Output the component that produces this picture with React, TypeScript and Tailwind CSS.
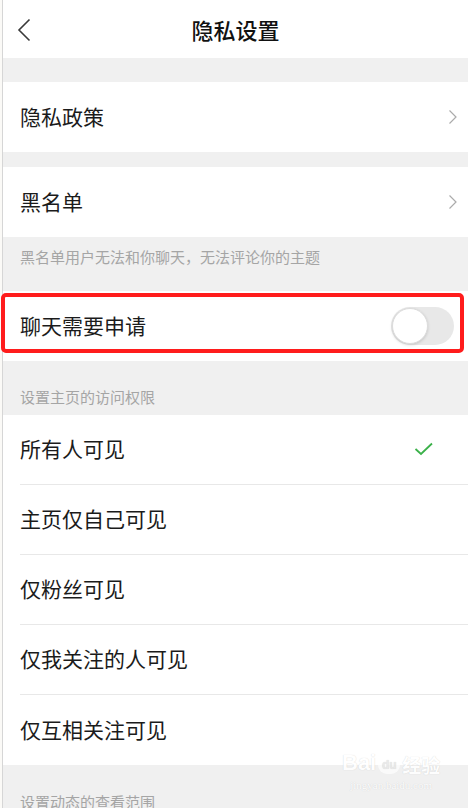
import React from "react";

const font = { fontFamily: '"Noto Sans CJK SC", "Noto Sans", sans-serif' };

function ChevronRight() {
  return (
    <svg width="10" height="16" viewBox="0 0 10 16" fill="none">
      <path d="M1.5 1.5 L8 8 L1.5 14.5" stroke="#ababab" strokeWidth="1.2" />
    </svg>
  );
}

function Row({ label, children, divider }: { label: string; children?: React.ReactNode; divider?: boolean }) {
  return (
    <div className="bg-white shrink-0">
      <div className={`${divider ? "h-[69px]" : "h-[70px]"} flex items-center pl-[17px] pr-[10px]`}>
        <span className="text-[21px] text-[#1b1b1b] flex-1 leading-none pb-[2px]">{label}</span>
        {children}
      </div>
      {divider && <div className="ml-[17px] h-px bg-[#e8e8e8]" />}
    </div>
  );
}

function Caption({ text, h, pt }: { text: string; h: string; pt: string }) {
  return (
    <div className={`${h} ${pt} pl-[17px] shrink-0`}>
      <span className="text-[15px] text-[#a5a5a5] leading-none">{text}</span>
    </div>
  );
}

export default function App() {
  return (
    <div className="w-[468px] h-[808px] overflow-hidden bg-[#f0f0f0] flex relative" style={font}>
      <div className="w-[3px] bg-[#fbfaf7] border-r border-[#d6d6d6] shrink-0" />
      <div className="flex-1 flex flex-col">
        <div className="h-[58px] shrink-0 bg-white grid grid-cols-[60px_1fr_60px] items-center">
          <div className="pl-[14px] pt-[2px]">
            <svg width="14" height="24" viewBox="0 0 14 24" fill="none">
              <path d="M12.5 1.5 L2 12 L12.5 22.5" stroke="#3a3a3a" strokeWidth="1.6" />
            </svg>
          </div>
          <div className="text-center text-[22px] font-medium text-[#111] leading-none">隐私设置</div>
          <div />
        </div>
        <div className="h-[24px] shrink-0" />
        <Row label="隐私政策">
          <ChevronRight />
        </Row>
        <div className="h-[15px] shrink-0" />
        <Row label="黑名单">
          <ChevronRight />
        </Row>
        <Caption text="黑名单用户无法和你聊天，无法评论你的主题" h="h-[54px]" pt="pt-[7px]" />
        <div className="relative shrink-0 bg-white h-[70px] flex items-center pl-[17px] pr-[14px]">
          <span className="text-[21px] text-[#1b1b1b] flex-1 leading-none pb-[2px]">聊天需要申请</span>
          <div className="w-[63px] h-[38px] rounded-full bg-[#e8e8e8] flex items-center px-px">
            <div className="w-[36px] h-[36px] rounded-full bg-white border border-[#dcdcdc] shadow-[0_1px_3px_rgba(0,0,0,0.15)]" />
          </div>
          <div className="absolute top-[2px] left-[-2px] right-[4px] h-[60px] border-[4px] border-[#ff1c1c] rounded-[5px] pointer-events-none" />
        </div>
        <Caption text="设置主页的访问权限" h="h-[54px]" pt="pt-[23px]" />
        <Row label="所有人可见" divider>
          <svg width="20" height="14" viewBox="0 0 20 14" fill="none" className="mr-[24px] mb-[2px]">
            <path d="M1.5 7 L7 12 L18 1.5" stroke="#3bb14a" strokeWidth="1.8" />
          </svg>
        </Row>
        <Row label="主页仅自己可见" divider />
        <Row label="仅粉丝可见" divider />
        <Row label="仅我关注的人可见" divider />
        <Row label="仅互相关注可见" />
        <Caption text="设置动态的查看范围" h="h-[54px]" pt="pt-[24px]" />
      </div>
      <div className="absolute left-[342px] top-[752px] pointer-events-none flex flex-col items-center text-white opacity-90 [text-shadow:0_0_1px_rgba(0,0,0,0.18)]">
        <div className="flex items-end gap-[2px] leading-none">
          <span className="text-[22px] font-bold" style={{ fontFamily: '"Liberation Sans", sans-serif' }}>Bai</span>
          <span className="w-[22px] h-[18px] rounded-full bg-white/80 text-[#e8e8e8] text-[12px] font-bold flex items-center justify-center" style={{ fontFamily: '"Liberation Sans", sans-serif' }}>du</span>
          <span className="text-[19px] font-bold">经验</span>
        </div>
        <span className="text-[11px] mt-[3px]" style={{ fontFamily: '"Liberation Serif", serif' }}>jingyan.baidu.com</span>
      </div>
    </div>
  );
}
